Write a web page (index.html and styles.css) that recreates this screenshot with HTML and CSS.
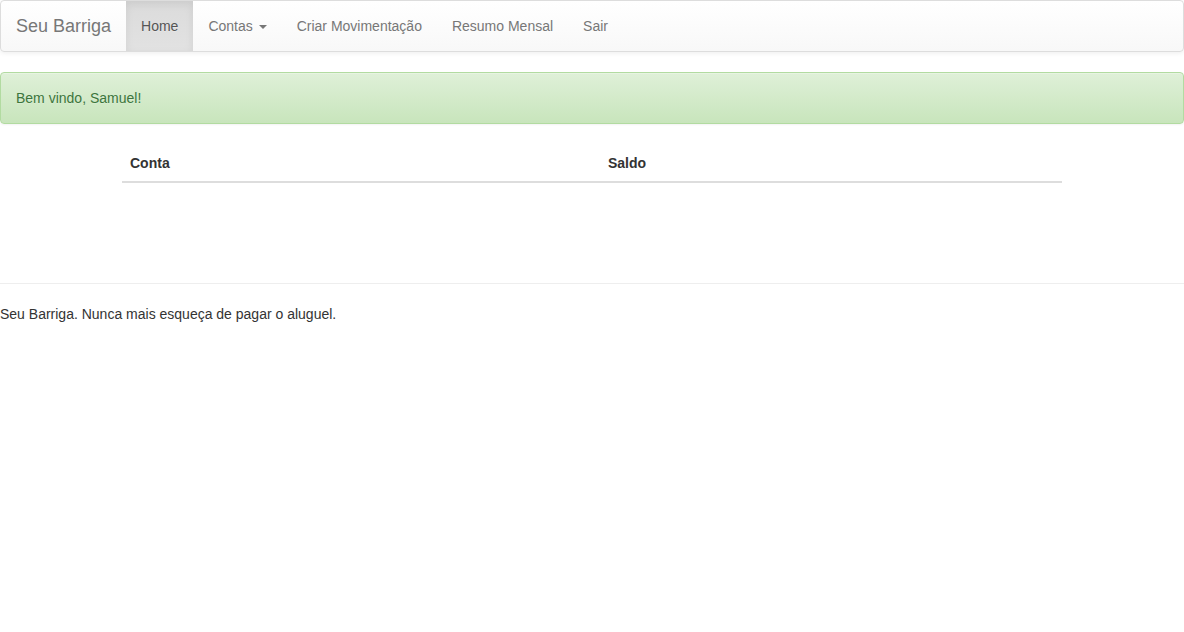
FILE: index.html
```html
<!DOCTYPE html>
<html lang="pt-BR">
<head>
<meta charset="utf-8">
<title>Seu Barriga</title>
<link rel="stylesheet" href="styles.css">
</head>
<body>
<nav class="navbar">
  <div class="navbar-inner">
    <a class="brand" href="#">Seu Barriga</a>
    <ul class="nav">
      <li class="active"><a href="#">Home</a></li>
      <li><a href="#">Contas <span class="caret"></span></a></li>
      <li><a href="#">Criar Movimentação</a></li>
      <li><a href="#">Resumo Mensal</a></li>
      <li><a href="#">Sair</a></li>
    </ul>
  </div>
</nav>
<div class="alert">Bem vindo, Samuel!</div>
<div class="container">
  <table class="table">
    <thead>
      <tr><th class="col-conta">Conta</th><th>Saldo</th></tr>
    </thead>
    <tbody></tbody>
  </table>
  <div class="spacer"></div>
</div>
<hr class="rule">
<footer class="footer">Seu Barriga. Nunca mais esqueça de pagar o aluguel.</footer>
</body>
</html>
```
FILE: styles.css
```css
* { box-sizing: border-box; }
html, body { margin: 0; padding: 0; }
body {
  font-family: "Liberation Sans", Arial, Helvetica, sans-serif;
  font-size: 14px;
  line-height: 20px;
  color: #333;
  background: #fff;
}
a { text-decoration: none; }
.navbar {
  min-height: 52px;
  margin-bottom: 20px;
  border: 1px solid #ddd;
  border-radius: 4px;
  background-image: linear-gradient(to bottom, #fff 0, #f8f8f8 100%);
  box-shadow: inset 0 1px 0 rgba(255,255,255,.15), 0 1px 5px rgba(0,0,0,.075);
}
.navbar-inner {
  display: flex;
  padding: 0 15px;
}
.brand {
  margin-left: -15px;
  padding: 15px;
  height: 50px;
  font-size: 18px;
  line-height: 20px;
  color: #777;
}
.nav {
  display: flex;
  list-style: none;
  margin: 0;
  padding: 0;
}
.nav a {
  display: block;
  padding: 15px;
  line-height: 20px;
  height: 50px;
  color: #777;
  text-shadow: 0 1px 0 rgba(255,255,255,.25);
}
.nav .active a {
  color: #555;
  background-image: linear-gradient(to bottom, #dbdbdb 0, #e2e2e2 100%);
  box-shadow: inset 0 3px 9px rgba(0,0,0,.075);
}
.caret {
  display: inline-block;
  width: 0;
  height: 0;
  margin-left: 2px;
  vertical-align: middle;
  border-top: 4px solid #777;
  border-right: 4px solid transparent;
  border-left: 4px solid transparent;
}
.alert {
  padding: 15px;
  margin-bottom: 20px;
  border: 1px solid #b2dba1;
  border-radius: 4px;
  color: #3c763d;
  background-image: linear-gradient(to bottom, #dff0d8 0, #c8e5bc 100%);
  text-shadow: 0 1px 0 rgba(255,255,255,.2);
  box-shadow: inset 0 1px 0 rgba(255,255,255,.25), 0 1px 2px rgba(0,0,0,.05);
}
.container {
  width: 970px;
  margin: 0 auto;
  padding: 1px 15px 0;
}
.table {
  width: 100%;
  border-collapse: collapse;
  border-spacing: 0;
  margin-bottom: 20px;
}
.table th {
  text-align: left;
  padding: 8px;
  line-height: 20px;
  font-weight: bold;
  border-bottom: 2px solid #ddd;
  vertical-align: bottom;
}
.col-conta { width: 478px; }
.spacer { height: 60px; }
.rule {
  margin: 20px 0;
  border: 0;
  border-top: 1px solid #eee;
  height: 0;
}
.footer { line-height: 20px; }
```
